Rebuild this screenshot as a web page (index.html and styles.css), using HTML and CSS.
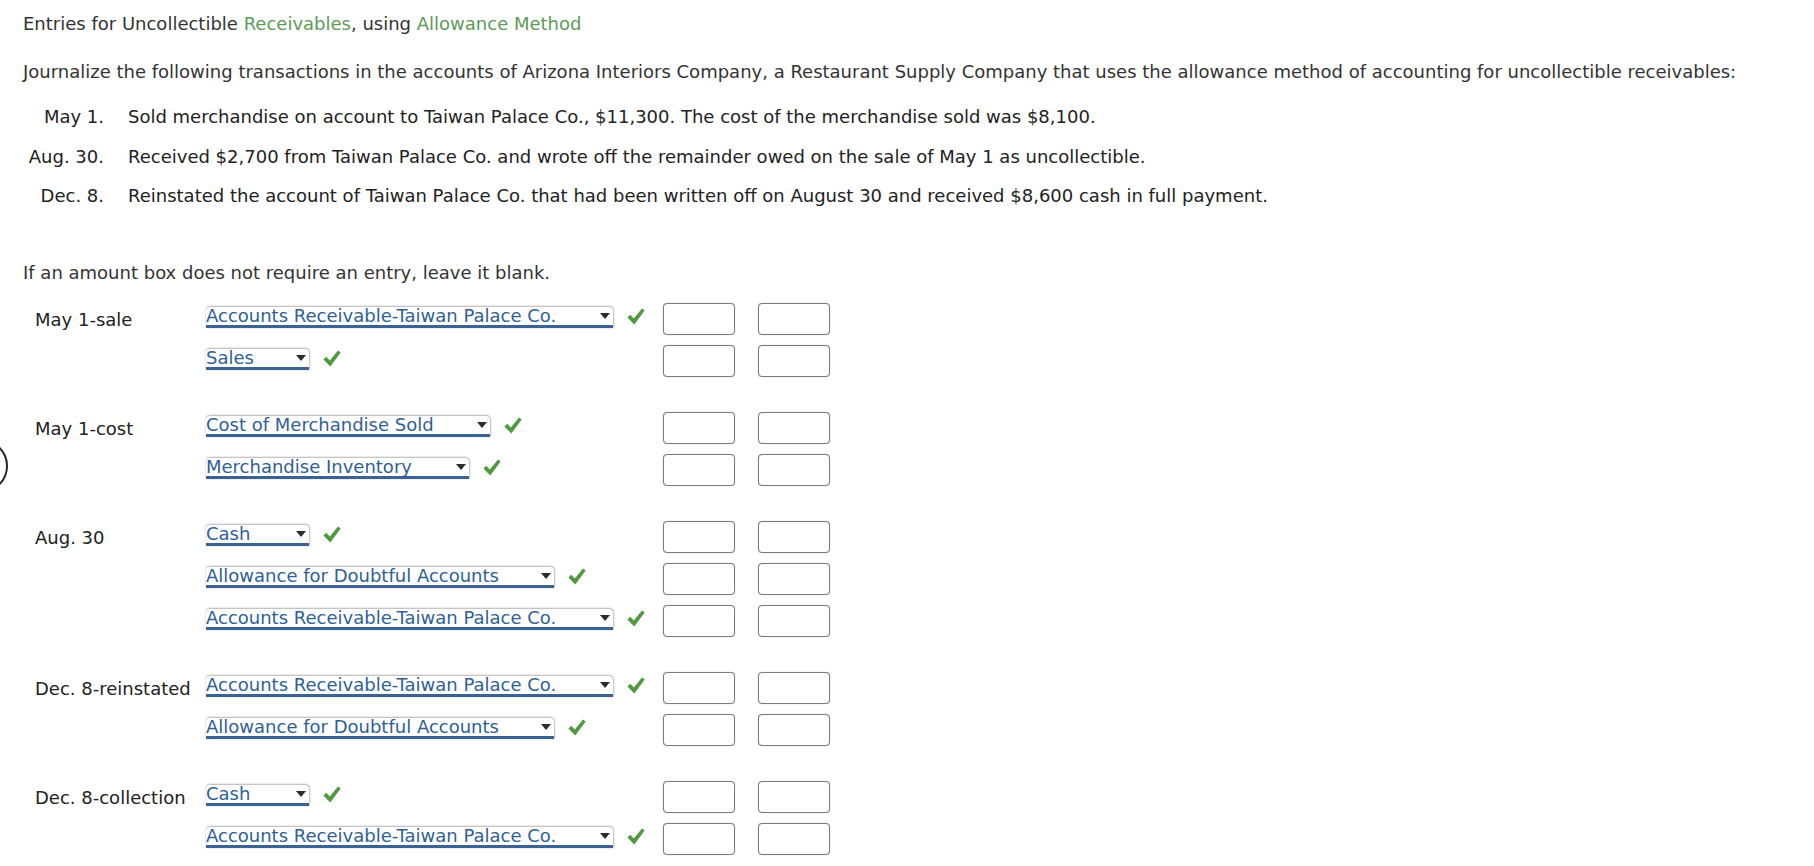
FILE: index.html
```html
<!DOCTYPE html>
<html>
<head>
<meta charset="utf-8">
<link rel="stylesheet" href="styles.css">
</head>
<body>
<div class="page">
  <p class="title">Entries for Uncollectible <span class="term">Receivables</span>, using <span class="term">Allowance Method</span></p>
  <p class="intro">Journalize the following transactions in the accounts of Arizona Interiors Company, a Restaurant Supply Company that uses the allowance method of accounting for uncollectible receivables:</p>
  <div class="trans">
    <div class="tdate">May 1.</div><div class="tdesc">Sold merchandise on account to Taiwan Palace Co., $11,300. The cost of the merchandise sold was $8,100.</div>
    <div class="tdate">Aug. 30.</div><div class="tdesc">Received $2,700 from Taiwan Palace Co. and wrote off the remainder owed on the sale of May 1 as uncollectible.</div>
    <div class="tdate">Dec. 8.</div><div class="tdesc">Reinstated the account of Taiwan Palace Co. that had been written off on August 30 and received $8,600 cash in full payment.</div>
  </div>
  <p class="note">If an amount box does not require an entry, leave it blank.</p>

  <div class="journal">
    <div class="group">
      <div class="row">
        <div class="label">May 1-sale</div>
        <div class="acct"><div class="sel w-ar">Accounts Receivable-Taiwan Palace Co.<span class="arrow"></span></div><svg class="check" viewBox="0 0 18 17"><path d="M0.4 9.4 L3.3 6.8 L6.8 10.6 L15.0 0.4 L17.7 2.5 L7.3 16.5 Z"/></svg></div>
        <div class="amt"></div><div class="amt"></div>
      </div>
      <div class="row">
        <div class="label"></div>
        <div class="acct"><div class="sel w-cash">Sales<span class="arrow"></span></div><svg class="check" viewBox="0 0 18 17"><path d="M0.4 9.4 L3.3 6.8 L6.8 10.6 L15.0 0.4 L17.7 2.5 L7.3 16.5 Z"/></svg></div>
        <div class="amt"></div><div class="amt"></div>
      </div>
    </div>

    <div class="group">
      <div class="row">
        <div class="label">May 1-cost</div>
        <div class="acct"><div class="sel w-cogs">Cost of Merchandise Sold<span class="arrow"></span></div><svg class="check" viewBox="0 0 18 17"><path d="M0.4 9.4 L3.3 6.8 L6.8 10.6 L15.0 0.4 L17.7 2.5 L7.3 16.5 Z"/></svg></div>
        <div class="amt"></div><div class="amt"></div>
      </div>
      <div class="row">
        <div class="label"></div>
        <div class="acct"><div class="sel w-inv">Merchandise Inventory<span class="arrow"></span></div><svg class="check" viewBox="0 0 18 17"><path d="M0.4 9.4 L3.3 6.8 L6.8 10.6 L15.0 0.4 L17.7 2.5 L7.3 16.5 Z"/></svg></div>
        <div class="amt"></div><div class="amt"></div>
      </div>
    </div>

    <div class="group">
      <div class="row">
        <div class="label">Aug. 30</div>
        <div class="acct"><div class="sel w-cash">Cash<span class="arrow"></span></div><svg class="check" viewBox="0 0 18 17"><path d="M0.4 9.4 L3.3 6.8 L6.8 10.6 L15.0 0.4 L17.7 2.5 L7.3 16.5 Z"/></svg></div>
        <div class="amt"></div><div class="amt"></div>
      </div>
      <div class="row">
        <div class="label"></div>
        <div class="acct"><div class="sel w-afda">Allowance for Doubtful Accounts<span class="arrow"></span></div><svg class="check" viewBox="0 0 18 17"><path d="M0.4 9.4 L3.3 6.8 L6.8 10.6 L15.0 0.4 L17.7 2.5 L7.3 16.5 Z"/></svg></div>
        <div class="amt"></div><div class="amt"></div>
      </div>
      <div class="row">
        <div class="label"></div>
        <div class="acct"><div class="sel w-ar">Accounts Receivable-Taiwan Palace Co.<span class="arrow"></span></div><svg class="check" viewBox="0 0 18 17"><path d="M0.4 9.4 L3.3 6.8 L6.8 10.6 L15.0 0.4 L17.7 2.5 L7.3 16.5 Z"/></svg></div>
        <div class="amt"></div><div class="amt"></div>
      </div>
    </div>

    <div class="group">
      <div class="row">
        <div class="label">Dec. 8-reinstated</div>
        <div class="acct"><div class="sel w-ar">Accounts Receivable-Taiwan Palace Co.<span class="arrow"></span></div><svg class="check" viewBox="0 0 18 17"><path d="M0.4 9.4 L3.3 6.8 L6.8 10.6 L15.0 0.4 L17.7 2.5 L7.3 16.5 Z"/></svg></div>
        <div class="amt"></div><div class="amt"></div>
      </div>
      <div class="row">
        <div class="label"></div>
        <div class="acct"><div class="sel w-afda">Allowance for Doubtful Accounts<span class="arrow"></span></div><svg class="check" viewBox="0 0 18 17"><path d="M0.4 9.4 L3.3 6.8 L6.8 10.6 L15.0 0.4 L17.7 2.5 L7.3 16.5 Z"/></svg></div>
        <div class="amt"></div><div class="amt"></div>
      </div>
    </div>

    <div class="group">
      <div class="row">
        <div class="label">Dec. 8-collection</div>
        <div class="acct"><div class="sel w-cash">Cash<span class="arrow"></span></div><svg class="check" viewBox="0 0 18 17"><path d="M0.4 9.4 L3.3 6.8 L6.8 10.6 L15.0 0.4 L17.7 2.5 L7.3 16.5 Z"/></svg></div>
        <div class="amt"></div><div class="amt"></div>
      </div>
      <div class="row">
        <div class="label"></div>
        <div class="acct"><div class="sel w-ar">Accounts Receivable-Taiwan Palace Co.<span class="arrow"></span></div><svg class="check" viewBox="0 0 18 17"><path d="M0.4 9.4 L3.3 6.8 L6.8 10.6 L15.0 0.4 L17.7 2.5 L7.3 16.5 Z"/></svg></div>
        <div class="amt"></div><div class="amt"></div>
      </div>
    </div>
  </div>
</div>
<div class="ring"></div>
</body>
</html>
```
FILE: styles.css
```css
html, body {
  margin: 0;
  padding: 0;
  background: #fff;
}
body {
  font-family: "DejaVu Sans", Verdana, sans-serif;
  font-size: 18px;
  line-height: 21px;
  color: #333;
  overflow: hidden;
  height: 866px;
  position: relative;
}
.page {
  padding: 13px 0 0 23px;
}
p {
  margin: 0;
}
.title {
  margin-bottom: 27px;
}
.term {
  color: #5d9b58;
}
.intro {
  margin-bottom: 24px;
}
.trans {
  display: grid;
  grid-template-columns: 81px auto;
  column-gap: 24px;
  grid-auto-rows: 39.5px;
  align-items: start;
  margin-bottom: 37.5px;
  color: #222;
}
.tdate {
  text-align: right;
}
.note {
  margin-bottom: 20px;
}
.journal {
  display: flex;
  flex-direction: column;
  gap: 35px;
}
.group {
  display: flex;
  flex-direction: column;
  gap: 10px;
}
.row {
  display: flex;
  height: 32px;
  align-items: flex-start;
}
.label {
  width: 171px;
  padding: 6px 0 0 12px;
  white-space: nowrap;
  color: #222;
}
.acct {
  width: 457px;
  display: flex;
  align-items: flex-start;
  padding-top: 4px;
}
.sel {
  position: relative;
  height: 18px;
  line-height: 18px;
  border-bottom: 3px solid #3a6391;
  border-radius: 4px 4px 0 0;
  box-shadow: 0 -1px 2px rgba(0,0,0,0.25), 1px 0 2px rgba(0,0,0,0.2);
  color: #2f5f97;
  white-space: nowrap;
  box-sizing: content-box;
  background: #fff;
}
.w-ar { width: 407px; }
.w-cash { width: 103px; }
.w-cogs { width: 284px; }
.w-inv { width: 263px; }
.w-afda { width: 348px; }
.arrow {
  position: absolute;
  right: 3px;
  top: 6px;
  width: 0;
  height: 0;
  border-left: 5px solid transparent;
  border-right: 5px solid transparent;
  border-top: 6px solid #2b2b2b;
}
.check {
  width: 18px;
  height: 17px;
  margin: 1px 0 0 14px;
  fill: #4f9a3f;
}
.amt {
  width: 72px;
  height: 32px;
  box-sizing: border-box;
  border: 1.5px solid #7c7c7c;
  border-radius: 4px;
  box-shadow: 0 0 1px rgba(0,0,0,0.35);
  margin-right: 23px;
  background: #fff;
}
.ring {
  position: absolute;
  left: -46px;
  top: 439px;
  width: 50px;
  height: 50px;
  border: 2.5px solid #222;
  border-radius: 50%;
}
```
